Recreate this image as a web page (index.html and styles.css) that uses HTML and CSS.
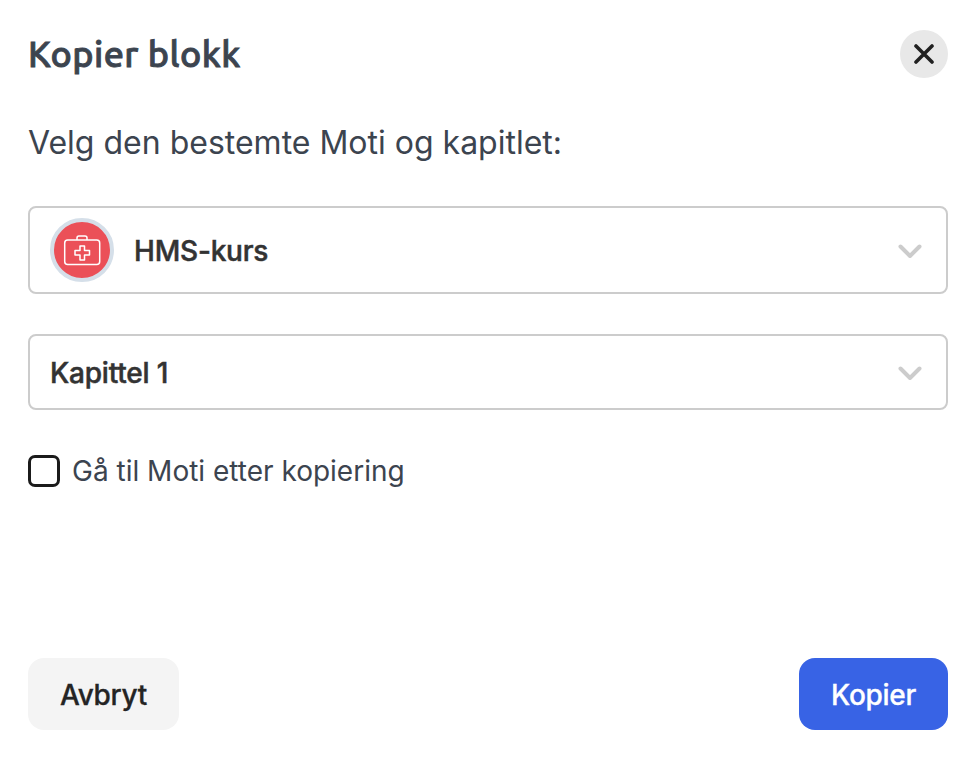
FILE: index.html
```
<!DOCTYPE html>
<html lang="nb">
<head>
    <meta charset="UTF-8">
    <meta name="viewport" content="width=device-width, initial-scale=1.0">
    <title>Kopier blokk</title>
    <link rel="stylesheet" href="styles.css">
</head>
<body>
    <div class="modal">
        <header class="modal-header">
            <h1>Kopier blokk</h1>
            <button class="close-btn" type="button" aria-label="Lukk">
                <svg width="20" height="20" viewBox="0 0 20 20">
                    <path d="M2 2l16 16M18 2L2 18" />
                </svg>
            </button>
        </header>

        <p class="intro">Velg den bestemte Moti og kapitlet:</p>

        <div class="select select-moti">
            <span class="avatar">
                <svg width="38" height="32" viewBox="0 0 38 32">
                    <rect x="1.7" y="6" width="35" height="24.500" rx="3" />
                    <path d="M14 6V4q0-2 2-2h6q2 0 2 2v2" />
                    <path d="M17 12h4.500v4.500h5V21h-5v5H17v-5h-5v-4.500h5z" />
                </svg>
            </span>
            <span class="select-value">HMS-kurs</span>
            <svg class="chevron" width="24" height="14" viewBox="0 0 24 14">
                <path d="M2.500 2.500l9.500 9.500 9.500-9.500" />
            </svg>
        </div>

        <div class="select select-chapter">
            <span class="select-value">Kapittel 1</span>
            <svg class="chevron" width="24" height="14" viewBox="0 0 24 14">
                <path d="M2.500 2.500l9.500 9.500 9.500-9.500" />
            </svg>
        </div>

        <label class="check">
            <input type="checkbox">
            <span>Gå til Moti etter kopiering</span>
        </label>

        <footer class="modal-footer">
            <button class="btn btn-cancel" type="button">Avbryt</button>
            <button class="btn btn-copy" type="button">Kopier</button>
        </footer>
    </div>
</body>
</html>
```
FILE: styles.css
```
* {
    box-sizing: border-box;
}

body {
    margin: 0;
    background: #ffffff;
    color: #3c444f;
    font-family: Inter, sans-serif;
}

.modal {
    display: flex;
    flex-direction: column;
    width: 976px;
    height: 760px;
    padding: 30px 28px;
}

.modal-header {
    display: flex;
    justify-content: space-between;
    align-items: center;
    height: 48px;
}

h1 {
    margin: 0;
    font-family: Ubuntu, "Noto Sans", sans-serif;
    font-size: 36px;
    font-weight: 500;
    line-height: 48px;
    letter-spacing: 0.45px;
    -webkit-text-stroke: 0.9px #3c444f;
}

.close-btn {
    display: flex;
    justify-content: center;
    align-items: center;
    width: 48px;
    height: 48px;
    padding: 0;
    border: none;
    border-radius: 50%;
    background: #e8e8e8;
}

.close-btn svg {
    fill: none;
    stroke: #212121;
    stroke-width: 3.6;
    stroke-linecap: round;
}

.intro {
    margin: 41px 0 39px;
    font-size: 32px;
    line-height: 48px;
}

.select {
    display: flex;
    align-items: center;
    padding: 0 24px 0 20px;
    border: 2px solid #cccccc;
    border-radius: 8px;
    color: #333333;
    font-size: 28px;
    font-weight: 500;
}

.select-value {
    margin-top: 1px;
    letter-spacing: -0.2px;
    -webkit-text-stroke: 0.5px #333333;
}

.select-moti {
    height: 88px;
}

.select-chapter {
    height: 76px;
    margin-top: 40px;
}

.avatar {
    display: flex;
    justify-content: center;
    align-items: center;
    width: 64px;
    height: 64px;
    margin-right: 20px;
    border: 4px solid #d5dfe9;
    border-radius: 50%;
    background: #eb5058;
}

.avatar svg {
    fill: none;
    stroke: #ffffff;
    stroke-width: 1.5;
    stroke-linejoin: round;
}

.chevron {
    margin-top: 2px;
    margin-left: auto;
    fill: none;
    stroke: #cccccc;
    stroke-width: 4;
    stroke-linecap: round;
    stroke-linejoin: round;
}

.check {
    display: flex;
    align-items: center;
    gap: 12px;
    margin-top: 41px;
    font-size: 28px;
    line-height: 40px;
}

.check input {
    appearance: none;
    width: 32px;
    height: 32px;
    margin: 0;
    border: 3px solid #1b1b1b;
    border-radius: 7px;
    background: #ffffff;
}

.modal-footer {
    display: flex;
    justify-content: space-between;
    margin-top: auto;
}

.btn {
    height: 72px;
    padding: 1px 0 0;
    border: none;
    border-radius: 16px;
    font-family: inherit;
    font-size: 28px;
    font-weight: 500;
    letter-spacing: -0.3px;
}

.btn-cancel {
    width: 151px;
    background: #f4f4f4;
    color: #242424;
    -webkit-text-stroke: 0.3px #242424;
}

.btn-copy {
    width: 149px;
    background: #3863e5;
    color: #ffffff;
    -webkit-text-stroke: 0.3px #ffffff;
}
```
